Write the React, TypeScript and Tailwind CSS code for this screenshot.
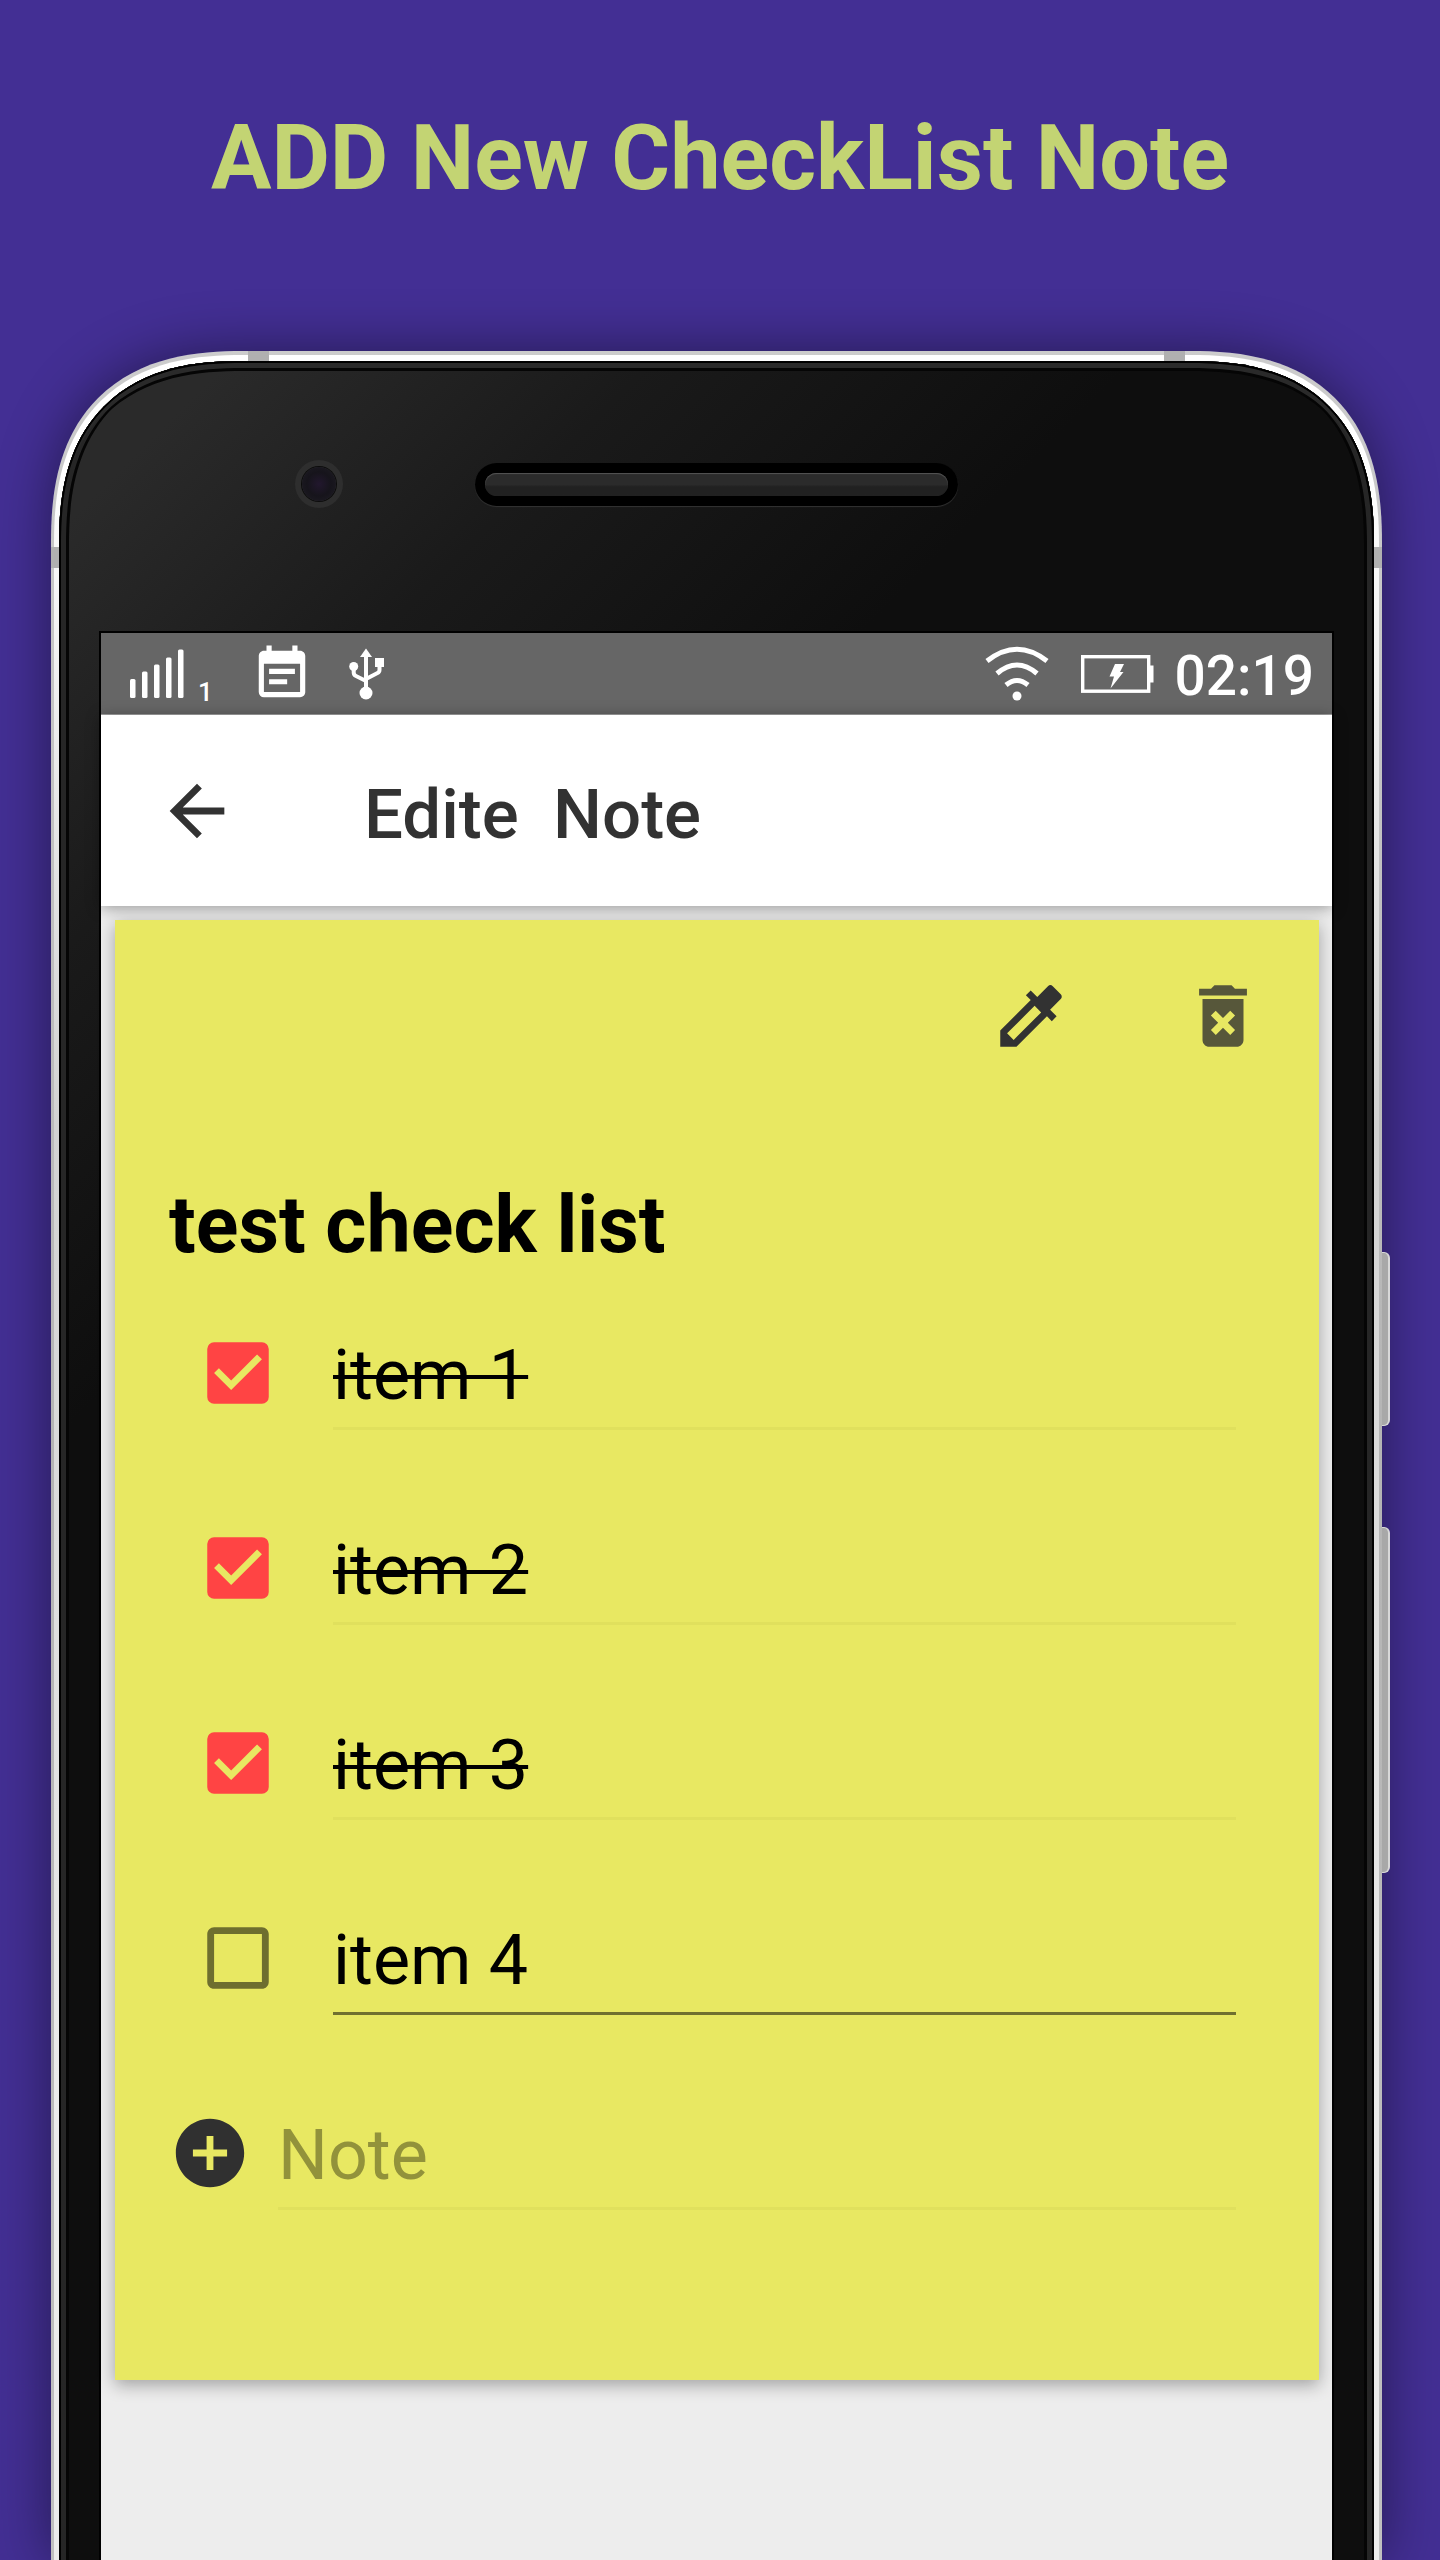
import { useState } from "react";
import {
  MdAddCircle,
  MdArrowBack,
  MdCheckBox,
  MdCheckBoxOutlineBlank,
  MdColorize,
  MdDeleteForever,
  MdEventNote,
} from "react-icons/md";

type Item = { id: number; text: string; done: boolean };

const initialItems: Item[] = [
  { id: 1, text: "item 1", done: true },
  { id: 2, text: "item 2", done: true },
  { id: 3, text: "item 3", done: true },
  { id: 4, text: "item 4", done: false },
];

function SignalIcon() {
  return (
    <svg width="54" height="50" viewBox="0 0 54 50" fill="#fff" aria-hidden="true">
      <rect x="0" y="30" width="5.5" height="19" rx="1.5" />
      <rect x="12" y="22.5" width="5.5" height="26.5" rx="1.5" />
      <rect x="24" y="15.5" width="5.5" height="33.5" rx="1.5" />
      <rect x="36" y="8.5" width="5.5" height="40.5" rx="1.5" />
      <rect x="48" y="0.5" width="5.5" height="48.5" rx="1.5" />
    </svg>
  );
}

function UsbIcon() {
  return (
    <svg width="36" height="52" viewBox="0 0 36 52" fill="#fff" aria-hidden="true">
      <path d="M17 0.5 23 9H11z" />
      <circle cx="17" cy="45" r="6.5" />
      <circle cx="4.7" cy="18.5" r="4.5" />
      <rect x="26" y="10" width="9" height="9" />
      <path
        d="M17 6V45M4.7 18V24.5Q4.7 27 7 28L17 33M30.5 16V22Q30.5 24 28.5 25L17 31"
        fill="none"
        stroke="#fff"
        strokeWidth="4"
      />
    </svg>
  );
}

function WifiIcon() {
  return (
    <svg width="64" height="56" viewBox="0 0 64 56" fill="none" stroke="#fff" strokeWidth="5" aria-hidden="true">
      <path d="M2 15Q32 -8.5 62 15" />
      <path d="M12 27.5Q32 10.5 52 27.5" />
      <path d="M21 39Q32 30 43 39" />
      <circle cx="32" cy="50" r="4.5" fill="#fff" stroke="none" />
    </svg>
  );
}

function BatteryIcon() {
  return (
    <svg width="73" height="38" viewBox="0 0 73 38" fill="#fff" aria-hidden="true">
      <rect x="1.7" y="1.7" width="66" height="34.5" fill="none" stroke="#fff" strokeWidth="3.4" />
      <rect x="68" y="10.5" width="4.5" height="17" />
      <path d="M34 9H43L39 17H42.5L29.5 33.5 33 21.5H28.5z" />
    </svg>
  );
}

function StatusBar() {
  return (
    <div className="flex h-[82px] items-center justify-between border-b border-[#a3a3a3] bg-[#666666] pr-[18px] pl-[29px] text-white">
      <div className="flex items-center">
        <SignalIcon />
        <span className="ml-[14px] pt-[36px] text-[26px] leading-[30px] font-medium">1</span>
        <MdEventNote size={62} className="ml-[38px]" aria-hidden="true" />
        <span className="ml-[36px]">
          <UsbIcon />
        </span>
      </div>
      <div className="flex items-center">
        <WifiIcon />
        <span className="ml-8">
          <BatteryIcon />
        </span>
        <time className="ml-5 pt-1 text-[55px] leading-[66px] font-medium">02:19</time>
      </div>
    </div>
  );
}

function CheckRow({
  item,
  onToggle,
  onText,
}: {
  item: Item;
  onToggle: () => void;
  onText: (text: string) => void;
}) {
  return (
    <li className="flex h-[195px] items-start pt-[46px] pr-[83px] pl-[82px]">
      <label className="relative mt-[10px] block size-[82px] shrink-0">
        <input
          type="checkbox"
          checked={item.done}
          onChange={onToggle}
          aria-label={"Done: " + item.text}
          className="absolute inset-0 size-full appearance-none"
        />
        {item.done ? (
          <MdCheckBox size={82} className="pointer-events-none relative text-[#ff4444]" />
        ) : (
          <MdCheckBoxOutlineBlank size={82} className="pointer-events-none relative text-[#6e6e2f]" />
        )}
      </label>
      <input
        type="text"
        value={item.text}
        onChange={(e) => onText(e.target.value)}
        aria-label={"Text of item " + item.id}
        className={
          item.done
            ? "ml-[54px] h-[108px] min-w-0 flex-1 border-b-3 border-[#e0e05d] text-[70px] text-black line-through decoration-4 outline-none"
            : "ml-[54px] h-[108px] min-w-0 flex-1 border-b-3 border-[#70702f] text-[70px] text-black outline-none"
        }
      />
    </li>
  );
}

function NoteCard() {
  const [items, setItems] = useState(initialItems);
  const [draft, setDraft] = useState("");

  const update = (id: number, change: Partial<Item>) =>
    setItems((list) => list.map((i) => (i.id === id ? { ...i, ...change } : i)));

  const add = () => {
    if (!draft.trim()) return;
    setItems((list) => [...list, { id: list.length + 1, text: draft, done: false }]);
    setDraft("");
  };

  return (
    <article className="relative mt-[14px] mr-[13px] ml-[14px] bg-[#e8e862] pt-[55px] pb-[129px] shadow-[0_5px_16px_rgba(0,0,0,0.32)]">
      <div className="flex justify-end gap-[110px] pr-[55px]">
        <button type="button" aria-label="Pick colour" className="text-[#323232]">
          <MdColorize size={82} />
        </button>
        <button type="button" aria-label="Delete note" className="text-[#57573a]">
          <MdDeleteForever size={82} />
        </button>
      </div>
      <h2 className="mt-[120px] mb-[3px] pl-[54px] text-[79px] leading-[96px] font-bold text-black">
        test check list
      </h2>
      <ul>
        {items.map((item) => (
          <CheckRow
            key={item.id}
            item={item}
            onToggle={() => update(item.id, { done: !item.done })}
            onText={(text) => update(item.id, { text })}
          />
        ))}
      </ul>
      <div className="flex h-[195px] items-start pt-[46px] pr-[83px] pl-[54px]">
        <button type="button" aria-label="Add item" onClick={add} className="mt-[10px] shrink-0 text-[#303030]">
          <MdAddCircle size={82} />
        </button>
        <input
          type="text"
          value={draft}
          onChange={(e) => setDraft(e.target.value)}
          placeholder="Note"
          aria-label="New item"
          className="ml-[27px] h-[108px] min-w-0 flex-1 border-b-3 border-[#e0e05d] text-[70px] text-black outline-none placeholder:text-[#92923b]"
        />
      </div>
    </article>
  );
}

export default function App() {
  return (
    <main className="flex min-h-screen flex-col overflow-hidden bg-[#432f94] font-[Roboto,sans-serif]">
      <h1 className="pt-[105px] pb-[138px] text-center text-[90px] leading-[108px] font-bold text-[#c3d473]">
        ADD New CheckList Note
      </h1>

      <div className="relative mr-[58px] ml-[51px] flex flex-1 flex-col rounded-t-[165px] bg-linear-to-b from-[#cccccc] via-[#b4b4b4] to-[#c0c0c0] px-[3px] pt-1 shadow-[0_0_56px_rgba(0,0,0,0.45)] supports-[corner-shape:squircle]:rounded-t-[192px] supports-[corner-shape:squircle]:[corner-shape:superellipse(1.3)]">
        <span className="absolute top-[901px] -right-2 h-[174px] w-2 rounded-r-md border-y border-r-2 border-[#d8d8d8] bg-[#a8a8a8]" />
        <span className="absolute top-[1176px] -right-2 h-[346px] w-2 rounded-r-md border-y border-r-2 border-[#d8d8d8] bg-[#a8a8a8]" />

        <div className="flex flex-1 flex-col rounded-t-[162px] bg-linear-to-b from-white from-5% via-[#d2d2d2] via-35% to-[#ececec] to-80% px-[5px] pt-[6px] supports-[corner-shape:squircle]:rounded-t-[189px] supports-[corner-shape:squircle]:[corner-shape:superellipse(1.3)]">
          <div className="flex flex-1 flex-col rounded-t-[157px] bg-[linear-gradient(135deg,#2a2a2a_120px,#1a1a1a_420px,#0e0e0e_760px)] px-[40px] shadow-[inset_0_2px_0_#000,inset_2px_0_0_#000,inset_-2px_0_0_#000,inset_0_7px_0_#2a2a2a,inset_7px_0_0_#262626,inset_-7px_0_0_#262626,inset_0_10px_0_#050505,inset_10px_0_0_#050505,inset_-10px_0_0_#050505] supports-[corner-shape:squircle]:rounded-t-[184px] supports-[corner-shape:squircle]:[corner-shape:superellipse(1.3)]">
            <div className="grid h-[270px] grid-cols-[1fr_auto_1fr] items-start pt-[99px]">
              <div className="mr-[132px] flex size-12 items-center justify-center justify-self-end rounded-full bg-[#2e2e2e]">
                <span className="size-[34px] rounded-full bg-radial from-[#22172e] via-[#16141b] to-[#1f1d25] shadow-[0_0_0_1px_#0c0c0c]" />
              </div>
              <div className="mt-[3px] h-[43px] w-[483px] rounded-full bg-black p-[10px] shadow-[0_1px_1px_#333]">
                <div className="h-full rounded-full bg-linear-to-b from-[#2b2b2b] from-50% to-[#212121] to-60% shadow-[inset_0_1px_1px_#555]" />
              </div>
            </div>

            <div className="flex flex-1 flex-col border-x-2 border-t-2 border-black bg-[#ededed]">
              <StatusBar />
              <header className="flex h-[191px] items-center bg-white pl-[55px] text-[#323232] shadow-[0_2px_14px_rgba(0,0,0,0.36)]">
                <button type="button" aria-label="Back">
                  <MdArrowBack size={82} />
                </button>
                <span className="ml-[126px] pt-2 text-[69px] leading-[80px] font-medium whitespace-pre">
                  {"Edite  Note"}
                </span>
              </header>
              <NoteCard />
            </div>
          </div>
        </div>

        <span className="absolute top-0 left-[197px] h-[10px] w-[21px] bg-[#b0b0b0]" />
        <span className="absolute top-0 right-[197px] h-[10px] w-[21px] bg-[#b0b0b0]" />
        <span className="absolute top-[196px] left-0 h-[21px] w-2 bg-[#b0b0b0]" />
        <span className="absolute top-[196px] right-0 h-[21px] w-2 bg-[#b0b0b0]" />
      </div>
    </main>
  );
}
